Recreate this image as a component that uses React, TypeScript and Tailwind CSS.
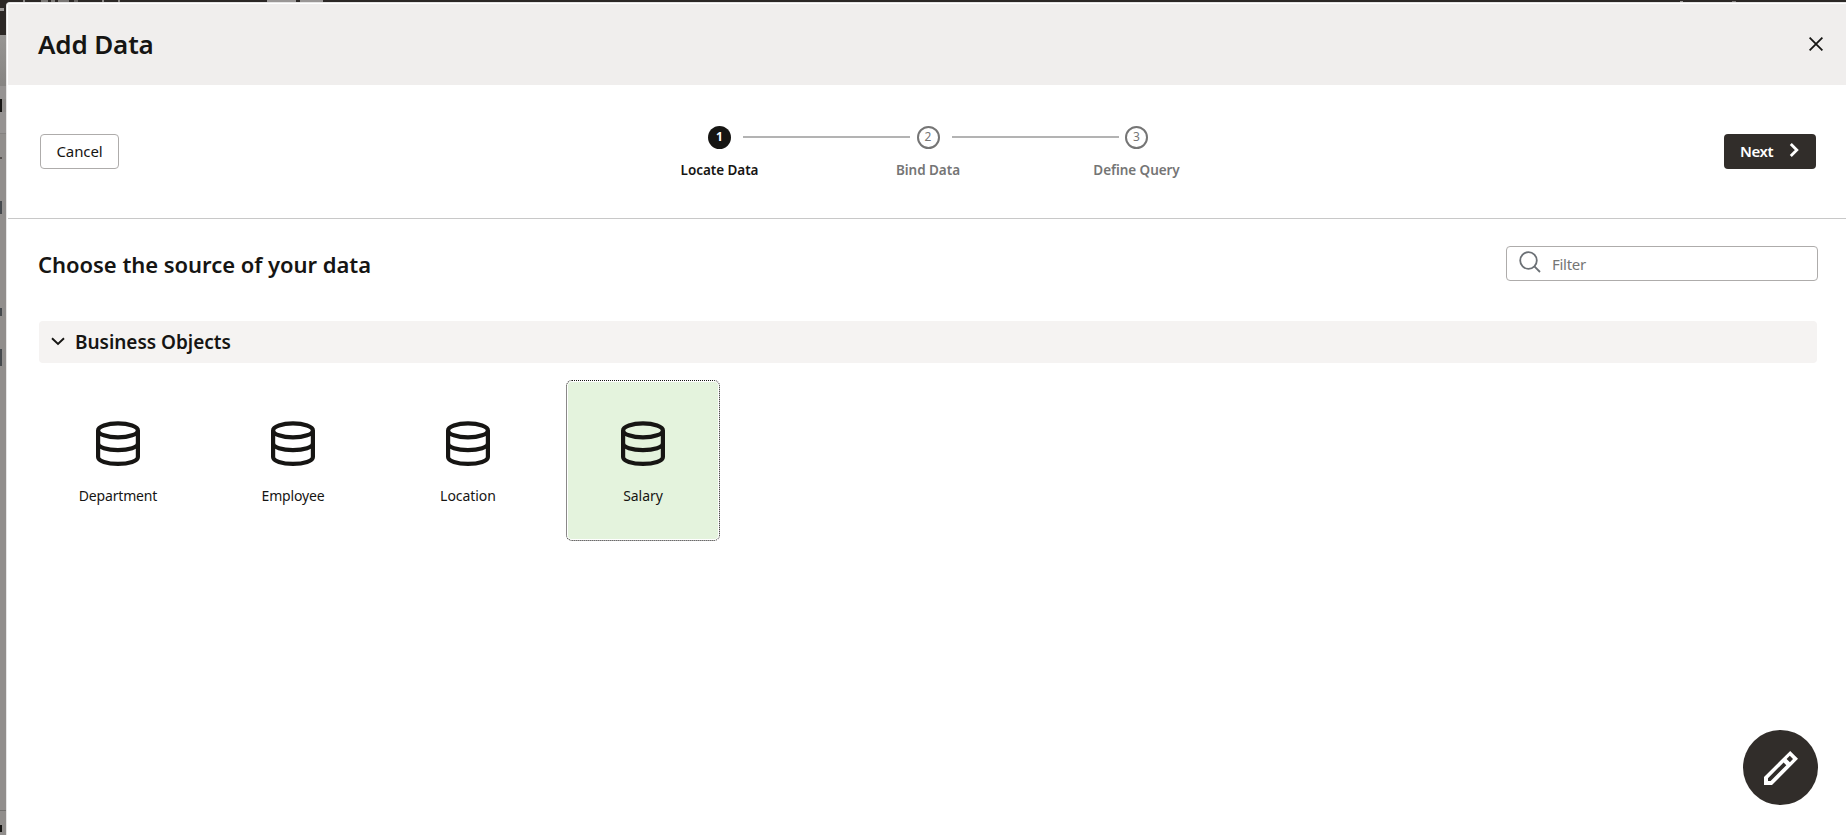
const objects = ["Department", "Employee", "Location", "Salary"];

const tracking: Record<string, string> = {
  Department: "tracking-[-0.17px]",
  Employee: "tracking-[-0.17px]",
  Location: "tracking-[-0.05px]",
  Salary: "tracking-[-0.05px]",
};

function DatabaseIcon() {
  return (
    <svg width="44" height="45" viewBox="0 0 44 45" fill="none" stroke="#161513" strokeWidth="4.2">
      <ellipse cx="22" cy="9.4" rx="19.9" ry="7" />
      <path d="M2.1 9.4V36c0 3.9 8.9 6.9 19.9 6.9s19.9-3 19.9-6.9V9.4" />
      <path d="M2.1 22.6c0 3.7 8.9 6.6 19.9 6.6s19.9-2.9 19.9-6.6" />
    </svg>
  );
}

function Tile({ name, selected }: { name: string; selected: boolean }) {
  return (
    <button
      className={
        "flex h-[161px] w-[154px] flex-col items-center rounded-[6px] border pt-[40px] " +
        (selected
          ? "border-dotted border-[#161513] bg-[#e4f3dd] bg-clip-padding shadow-[inset_0_0_0_1px_#ffffff]"
          : "border-transparent")
      }
    >
      <DatabaseIcon />
      <span className={"mt-[20px] text-[14px] leading-5 " + tracking[name]}>{name}</span>
    </button>
  );
}

function Connector() {
  return <div className="mt-[15px] mr-[6.5px] ml-[12px] h-[2px] w-[167px] bg-[#b3b3b3]" />;
}

function Step({ n, label, active }: { n: number; label: string; active?: boolean }) {
  return (
    <div className="flex w-[23px] flex-col items-center pt-[4.5px]">
      <div
        className={
          "flex size-[23px] shrink-0 items-center justify-center rounded-full text-[12px] leading-none " +
          (active ? "bg-[#161513] font-bold text-white" : "border-2 border-[#757575] text-[#757575]")
        }
      >
        {n}
      </div>
      <div
        className={
          "mt-[11.5px] text-[13.5px] leading-5 font-semibold tracking-[-0.05px] whitespace-nowrap " +
          (active ? "text-[#161513]" : "text-[#757575]")
        }
      >
        {label}
      </div>
    </div>
  );
}

/* Visible edge of the page that lies behind the dialog */
function PageEdge() {
  return (
    <div className="flex w-[6px] shrink-0 flex-col overflow-hidden bg-[#918e8c]">
      <div className="h-[8px] shrink-0 bg-[#2c2826]" />
      <div className="h-[3px] shrink-0 bg-[#2c2826]">
        <div className="h-[3px] w-[4px] bg-[#9a9796]" />
      </div>
      <div className="h-[24px] shrink-0 bg-[#2c2826]" />
      <div className="h-[51px] shrink-0 bg-gradient-to-b from-[#979593] to-[#868482]" />
      <div className="h-[13px] shrink-0 bg-[#969392]" />
      <div className="h-[13px] w-[2px] shrink-0 bg-[#161513]" />
      <div className="h-[22px] shrink-0 border-b border-[#858280] bg-[#969392]" />
      <div className="mt-[23px] h-[2px] w-[2px] shrink-0 bg-[#55504e]" />
      <div className="mt-[42px] h-[13px] w-[2px] shrink-0 bg-[#45494d]" />
      <div className="mt-[94px] h-[8px] w-[2px] shrink-0 bg-[#45494d]" />
      <div className="mt-[33px] h-[17px] w-[2px] shrink-0 bg-[#45494d]" />
      <div className="mt-[444px] h-px shrink-0 bg-[#72706e]" />
      <div className="mt-[14px] h-[7px] w-[2px] shrink-0 bg-[#161513]" />
    </div>
  );
}

export default function App() {
  return (
    <div className="flex h-[835px] w-full overflow-hidden bg-[#2c2826] font-['Noto_Sans',sans-serif] text-[#161513]">
      <PageEdge />
      <div className="flex min-w-0 flex-1 flex-col">
        <div className="flex h-[2px] shrink-0">
          <div className="ml-[17px] h-[2px] w-[2px] bg-[#8a8785]" />
          <div className="ml-[16px] h-[2px] w-[7px] bg-[#7a7775]" />
          <div className="ml-[3px] h-[2px] w-[4px] bg-[#7a7775]" />
          <div className="ml-[3px] h-[2px] w-[11px] bg-[#7a7775]" />
          <div className="ml-[5px] h-[2px] w-[4px] bg-[#65615f]" />
          <div className="ml-[24px] h-[2px] w-[2px] bg-[#8a8785]" />
          <div className="ml-[14px] h-[2px] w-[2px] bg-[#8a8785]" />
          <div className="ml-[147px] h-[2px] w-[29px] bg-[#9a9796]" />
          <div className="ml-[4px] h-[2px] w-[23px] bg-[#9a9796]" />
          <div className="mt-px ml-[1357px] h-px w-[3px] bg-[#9a9796]" />
          <div className="mt-px ml-[49px] h-px w-[4px] bg-[#7a7775]" />
        </div>
        <main className="relative flex flex-1 flex-col rounded-tl-[4px] border-t border-l border-[#e6e5e5] bg-white pt-px pl-px">
          <header className="flex h-[81px] shrink-0 items-center justify-between bg-[#f0eeed] pr-[23px] pl-[30px]">
            <h1 className="-mt-px text-[26px] leading-9 font-semibold tracking-[-0.15px]">Add Data</h1>
            <svg width="14" height="14" viewBox="0 0 14 14" className="-mt-[2px]" stroke="#161513" strokeWidth="1.8">
              <path d="M0.6 0.6l12.8 12.8M13.4 0.6L0.6 13.4" />
            </svg>
          </header>

          <section className="flex h-[134px] shrink-0 items-start border-b border-[#c8c8c8] pr-[30px] pl-[32px]">
            <button className="mt-[49px] h-[35px] w-[79px] rounded-[4px] border border-[#aeacab] text-[15px] tracking-[-0.1px]">
              Cancel
            </button>
            <div className="mt-[36px] ml-[589px] flex items-start">
              <Step n={1} label="Locate Data" active />
              <Connector />
              <Step n={2} label="Bind Data" />
              <Connector />
              <Step n={3} label="Define Query" />
            </div>
            <button className="mt-[49px] ml-auto flex h-[35px] w-[92px] items-center rounded-[4px] bg-[#312d2a] pl-[16px] text-[15px] font-semibold tracking-[-0.4px] text-white">
              Next
              <svg width="10" height="14" viewBox="0 0 10 14" className="-mt-[3px] mr-[17px] ml-auto" fill="none" stroke="white" strokeWidth="2.8">
                <path d="M1.8 1L7.8 7L1.8 13" />
              </svg>
            </button>
          </section>

          <section className="flex flex-col pr-[28px] pl-[31px]">
            <div className="mt-[27px] flex h-[35px] items-center justify-between">
              <h2 className="-ml-px text-[22px] leading-8 font-semibold tracking-[-0.04px]">Choose the source of your data</h2>
              <div className="flex h-[35px] w-[312px] items-center rounded-[4px] border border-[#aeacab] pl-[12px] text-[15px] text-[#757575]">
                <svg width="22" height="22" viewBox="0 0 22 22" className="-mt-[4px]" fill="none" stroke="#6b7075" strokeWidth="1.8">
                  <circle cx="9.5" cy="9.5" r="8.3" />
                  <path d="M15.4 15.4L21 21" />
                </svg>
                <span className="mt-px ml-[11px] tracking-[-0.3px]">Filter</span>
              </div>
            </div>

            <div className="mt-[40px] mr-px flex h-[42px] items-center rounded-[4px] bg-[#f5f3f2] pl-[12px]">
              <svg width="14" height="9" viewBox="0 0 14 9" className="-mt-[2px]" fill="none" stroke="#161513" strokeWidth="1.9">
                <path d="M1 1.2L7 7L13 1.2" />
              </svg>
              <h3 className="ml-[10px] text-[19px] leading-6 font-semibold tracking-[-0.03px]">Business Objects</h3>
            </div>

            <div className="mt-[17px] ml-[2px] flex gap-[21px]">
              {objects.map((name) => (
                <Tile key={name} name={name} selected={name === "Salary"} />
              ))}
            </div>
          </section>

          <button className="absolute right-[28px] bottom-[30px] flex size-[75px] items-center justify-center rounded-full bg-[#312d2a]">
            <svg width="34" height="34" viewBox="0 0 34 34" fill="white" fillRule="evenodd">
              <path d="M0 26L26.2 0L34 7.8L8 34H0ZM4 27.2V30H6.6L22.3 14.2L19.6 11.5ZM22.6 7.9L25.9 11.2L29 8L25.8 4.8Z" />
            </svg>
          </button>
        </main>
      </div>
    </div>
  );
}
